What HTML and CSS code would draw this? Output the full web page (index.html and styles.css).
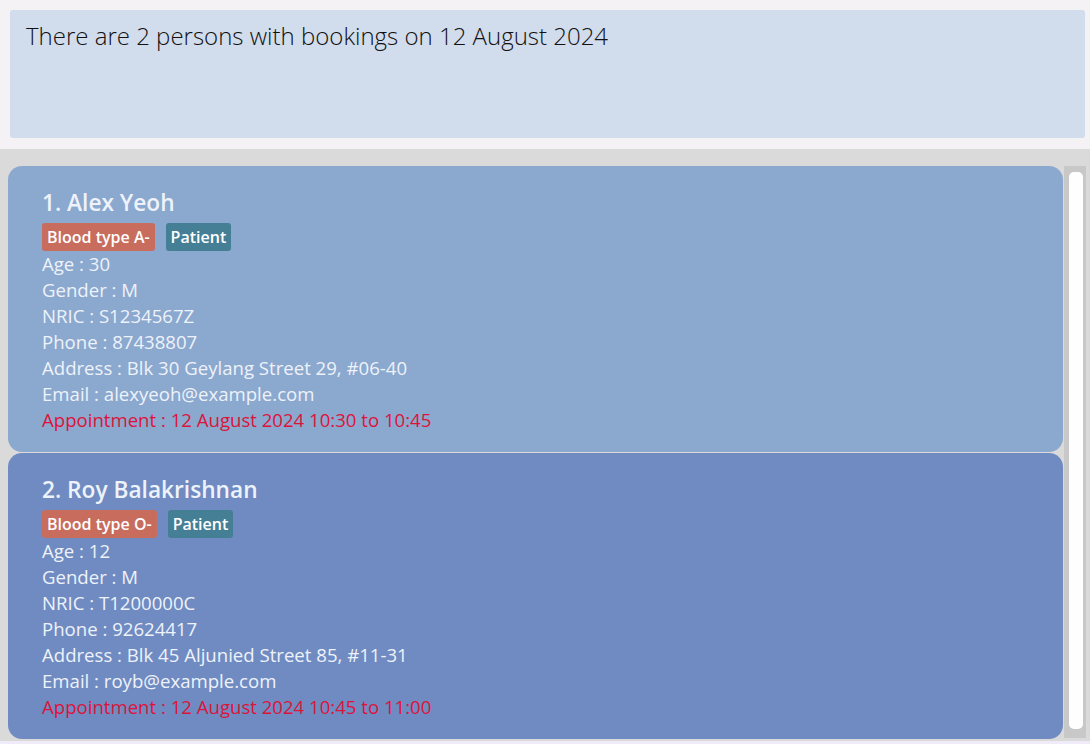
FILE: index.html
```html
<!DOCTYPE html>
<html>
<head>
<meta charset="utf-8">
<link rel="stylesheet" href="styles.css">
</head>
<body>
<div class="top">
  <div class="result">There are 2 persons with bookings on 12 August 2024</div>
</div>
<div class="list">
  <div class="cards">
    <div class="card card-a">
      <div class="name">1. Alex Yeoh</div>
      <div class="tags"><span class="tag blood">Blood type A-</span><span class="tag patient">Patient</span></div>
      <div class="line">Age : 30</div>
      <div class="line">Gender : M</div>
      <div class="line">NRIC : S1234567Z</div>
      <div class="line">Phone : 87438807</div>
      <div class="line">Address : Blk 30 Geylang Street 29, #06-40</div>
      <div class="line">Email : alexyeoh@example.com</div>
      <div class="line appt">Appointment : 12 August 2024 10:30 to 10:45</div>
    </div>
    <div class="card card-b">
      <div class="name">2. Roy Balakrishnan</div>
      <div class="tags"><span class="tag blood">Blood type O-</span><span class="tag patient">Patient</span></div>
      <div class="line">Age : 12</div>
      <div class="line">Gender : M</div>
      <div class="line">NRIC : T1200000C</div>
      <div class="line">Phone : 92624417</div>
      <div class="line">Address : Blk 45 Aljunied Street 85, #11-31</div>
      <div class="line">Email : royb@example.com</div>
      <div class="line appt">Appointment : 12 August 2024 10:45 to 11:00</div>
    </div>
  </div>
  <div class="scrollbar"><div class="thumb"></div></div>
</div>
</body>
</html>
```

FILE: styles.css
```css
html, body {
  margin: 0;
  padding: 0;
}
body {
  width: 1090px;
  height: 744px;
  overflow: hidden;
  background: #f0ebf8;
  font-family: "Open Sans", "Noto Sans", sans-serif;
}
.top {
  height: 149px;
  box-sizing: border-box;
  padding: 10px 5px 11px 10px;
  background: #f4f2f4;
}
.result {
  height: 128px;
  box-sizing: border-box;
  background: #d1dcec;
  border-radius: 3px;
  padding: 10px 16px;
  font-size: 24px;
  font-weight: 300;
  line-height: 32px;
  color: #111;
}
.list {
  height: 592px;
  box-sizing: border-box;
  background: #dadada;
  padding: 17px 4px 2px 8px;
  display: flex;
  gap: 1px;
}
.cards {
  width: 1055px;
  display: flex;
  flex-direction: column;
  gap: 1px;
}
.card {
  border-radius: 14px;
  padding: 22px 34px 19px;
  color: #eef2fa;
}
.card-a { background: #8ba8ce; }
.card-b { background: #6f8bc1; }
.name {
  font-size: 22.7px;
  font-weight: 600;
  line-height: 30px;
  margin-bottom: 5px;
}
.tags {
  display: flex;
  gap: 11px;
  height: 28px;
}
.tag {
  height: 28px;
  box-sizing: border-box;
  padding: 0 5px;
  border-radius: 3px;
  font-size: 16px;
  font-weight: 600;
  line-height: 28px;
  color: #fff;
}
.blood { background: #c86c5e; }
.patient { background: #457f96; }
.line {
  font-size: 18.6px;
  line-height: 26px;
}
.appt { color: #dc143c; }
.scrollbar {
  width: 22px;
  background: #c8c8c8;
  padding: 6px 3px 9px 5px;
  box-sizing: border-box;
  height: 572px;
}
.thumb {
  height: 100%;
  background: #fefefe;
  border-radius: 5px;
}
```
